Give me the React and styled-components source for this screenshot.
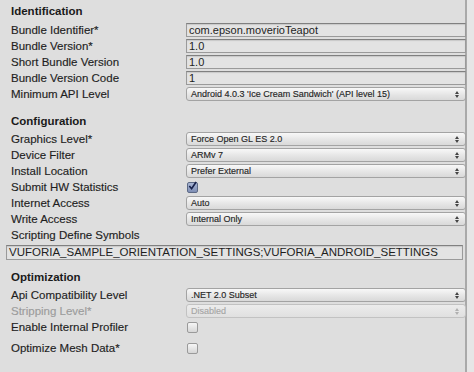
import React from "react";
import styled, { createGlobalStyle } from "styled-components";

const GlobalStyle = createGlobalStyle`
  html, body {
    margin: 0;
    padding: 0;
    background: #e6e6e6;
  }
  body {
    font-family: "Liberation Sans", Arial, sans-serif;
    color: #1e1e1e;
  }
`;

const Frame = styled.div`
  display: flex;
  width: 474px;
  height: 372px;
  overflow: hidden;
`;

const Panel = styled.div`
  width: 467px;
  flex: none;
  background: #dedede;
  border-right: 2px solid #a9a9a9;
  padding: 3px 0 0 0;
  box-sizing: border-box;
`;

const Section = styled.section`
  display: flex;
  flex-direction: column;
  margin-bottom: ${(p) => p.$after || 10}px;
`;

const Heading = styled.div`
  height: 16px;
  line-height: 16px;
  padding-left: 11px;
  font-size: 11.5px;
  font-weight: bold;
  color: #1a1a1a;
`;

const Row = styled.div`
  display: grid;
  grid-template-columns: 186px 280px;
  align-items: center;
  height: 16px;
  margin-top: ${(p) => p.$gap || 0}px;
`;

const Label = styled.div`
  padding-left: 11px;
  font-size: 11.5px;
  color: ${(p) => (p.$disabled ? "#9c9c9c" : "#1e1e1e")};
  -webkit-text-stroke: 0.15px currentColor;
  white-space: nowrap;
`;

const TextField = styled.div`
  height: 14px;
  box-sizing: border-box;
  border: 1px solid #9a9a9a;
  border-top-color: #808080;
  background: #e3e3e3;
  box-shadow: inset 0 1px 1px rgba(0, 0, 0, 0.12);
  font-size: 11px;
  line-height: 12px;
  padding-left: 2px;
  white-space: nowrap;
  overflow: hidden;
`;

const WideField = styled(TextField)`
  margin: 2px 2px 0 6px;
  height: 15px;
  line-height: 13px;
  font-size: 11.5px;
`;

const Select = styled.div`
  position: relative;
  height: 14px;
  box-sizing: border-box;
  border: 1px solid ${(p) => (p.$disabled ? "#c2c2c2" : "#a3a3a3")};
  border-radius: 3px;
  background: ${(p) =>
    p.$disabled
      ? "linear-gradient(#ececec, #e0e0e0)"
      : "linear-gradient(#f8f8f8, #e4e4e4 60%, #d9d9d9)"};
  font-size: 9px;
  line-height: 12px;
  padding-left: 4px;
  color: ${(p) => (p.$disabled ? "#a6a6a6" : "#262626")};
  -webkit-text-stroke: 0.15px currentColor;
  white-space: nowrap;
`;

const Arrows = styled.svg`
  position: absolute;
  right: 6px;
  top: 3px;
`;

const Box = styled.div`
  width: 11px;
  height: 11px;
  margin-left: 1px;
  box-sizing: border-box;
  border: 1px solid ${(p) => (p.$checked ? "#5d6a86" : "#9a9a9a")};
  border-radius: 2px;
  background: ${(p) =>
    p.$checked
      ? "linear-gradient(#a9b6d4, #7f8fb5)"
      : "linear-gradient(#f6f6f6, #d6d6d6)"};
  display: flex;
  align-items: center;
  justify-content: center;
`;

const Dropdown = ({ children, disabled }) => (
  <Select $disabled={disabled}>
    {children}
    <Arrows width="4" height="7" viewBox="0 0 4 7">
      <path d="M0 3 L2 0 L4 3 Z M0 4 L2 7 L4 4 Z" fill={disabled ? "#b0b0b0" : "#444"} />
    </Arrows>
  </Select>
);

const Check = ({ checked }) => (
  <Box $checked={checked}>
    {checked && (
      <svg width="10" height="10" viewBox="0 0 10 10" style={{ marginTop: -2 }}>
        <path d="M1.5 5 L4 8 L9 0.5" stroke="#16204a" strokeWidth="1.8" fill="none" />
      </svg>
    )}
  </Box>
);

export default function App() {
  return (
    <>
      <GlobalStyle />
      <Frame>
        <Panel>
          <Section $after={11}>
            <Heading>Identification</Heading>
            <Row $gap={3}>
              <Label>Bundle Identifier*</Label>
              <TextField>com.epson.moverioTeapot</TextField>
            </Row>
            <Row>
              <Label>Bundle Version*</Label>
              <TextField>1.0</TextField>
            </Row>
            <Row>
              <Label>Short Bundle Version</Label>
              <TextField>1.0</TextField>
            </Row>
            <Row>
              <Label>Bundle Version Code</Label>
              <TextField>1</TextField>
            </Row>
            <Row>
              <Label>Minimum API Level</Label>
              <Dropdown>Android 4.0.3 'Ice Cream Sandwich' (API level 15)</Dropdown>
            </Row>
          </Section>

          <Section $after={9}>
            <Heading>Configuration</Heading>
            <Row $gap={2}>
              <Label>Graphics Level*</Label>
              <Dropdown>Force Open GL ES 2.0</Dropdown>
            </Row>
            <Row>
              <Label>Device Filter</Label>
              <Dropdown>ARMv 7</Dropdown>
            </Row>
            <Row>
              <Label>Install Location</Label>
              <Dropdown>Prefer External</Dropdown>
            </Row>
            <Row>
              <Label>Submit HW Statistics</Label>
              <Check checked />
            </Row>
            <Row>
              <Label>Internet Access</Label>
              <Dropdown>Auto</Dropdown>
            </Row>
            <Row>
              <Label>Write Access</Label>
              <Dropdown>Internal Only</Dropdown>
            </Row>
            <Row>
              <Label>Scripting Define Symbols</Label>
            </Row>
            <WideField>VUFORIA_SAMPLE_ORIENTATION_SETTINGS;VUFORIA_ANDROID_SETTINGS</WideField>
          </Section>

          <Section>
            <Heading>Optimization</Heading>
            <Row $gap={2}>
              <Label>Api Compatibility Level</Label>
              <Dropdown>.NET 2.0 Subset</Dropdown>
            </Row>
            <Row>
              <Label $disabled>Stripping Level*</Label>
              <Dropdown disabled>Disabled</Dropdown>
            </Row>
            <Row>
              <Label>Enable Internal Profiler</Label>
              <Check />
            </Row>
            <Row $gap={5}>
              <Label>Optimize Mesh Data*</Label>
              <Check />
            </Row>
          </Section>
        </Panel>
      </Frame>
    </>
  );
}
